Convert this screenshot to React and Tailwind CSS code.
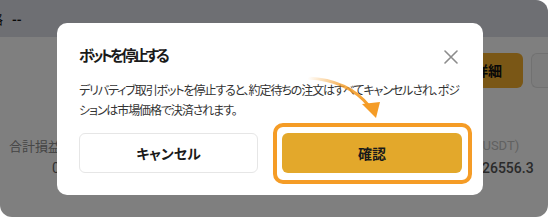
import React from "react";

const jp = { fontFamily: '"Noto Sans CJK JP", "Noto Sans", sans-serif' };
const latin = { fontFamily: 'Roboto, "Liberation Sans", sans-serif' };

export default function App() {
  return (
    <div className="w-[550px] h-[218px] bg-white" style={jp}>
      <div className="relative w-[548px] h-[217px] overflow-hidden rounded-tr-[12px] rounded-b-[12px] bg-white">
        {/* page behind the dialog */}
        <div className="flex h-[37px] items-center bg-[#dcdee6] text-[13px] text-[#111]">
          <span className="-ml-[10px]">格</span>
          <span className="ml-[9px] font-bold">--</span>
        </div>
        <div className="flex justify-end gap-[8px] pt-[16px]">
          <div className="flex h-[35px] w-[70px] items-center justify-center rounded-[6px] bg-[#f4ae2d] text-[14px] font-bold text-[#111]">
            詳細
          </div>
          <div className="h-[35px] w-[17px] rounded-l-[6px] border border-r-0 border-[#e2e2e2] bg-[#f8f8f8]" />
        </div>
        <div className="flex items-start pt-[48px]">
          <div className="flex w-[112px] flex-col items-center">
            <span className="text-[13px] leading-[20px] text-[#8c8c8c]">合計損益(USDT)</span>
            <span className="mt-[2px] text-[14px] leading-[20px] text-[#666]" style={latin}>0</span>
          </div>
          <div className="ml-auto flex w-[70px] flex-col">
            <span className="text-[13px] leading-[20px] text-[#c2c2c2]" style={latin}>
              (USDT)
            </span>
            <span className="mt-[2px] pl-[4px] text-[14px] leading-[20px] font-medium text-[#555]" style={latin}>
              26556.3
            </span>
          </div>
        </div>

        {/* dim overlay */}
        <div className="absolute inset-0 bg-black/50" />

        {/* dialog */}
        <div className="absolute left-[57px] top-[23px] flex w-[426px] h-[172px] flex-col rounded-[10px] bg-white pl-[22px] pr-[21px] pt-[20px] [font-feature-settings:'palt']">
          <div className="flex items-center justify-between">
            <h2 className="text-[15px] leading-[24px] font-bold tracking-[-3px] text-[#1a1a1a]">ボットを停止する</h2>
            <svg width="14" height="14" viewBox="0 0 14 14" className="mr-[4px] mt-[3px]">
              <path d="M1 1 L13 13 M13 1 L1 13" stroke="#8c8c8c" strokeWidth="1.6" strokeLinecap="round" />
            </svg>
          </div>
          <p className="mt-[13px] text-[12px] leading-[20px] tracking-[-1.1px] text-[#333]">
            デリバティブ取引ボットを停止すると、約定待ちの注文はすべてキャンセルされ、ポジションは市場価格で決済されます。
          </p>
          <div className="mt-[13px] flex gap-[24px]">
            <button className="flex h-[40px] w-[179px] items-center justify-center rounded-[6px] border border-[#e6e6e6] bg-white text-[14px] font-bold text-[#1a1a1a]">
              キャンセル
            </button>
            <button className="flex h-[40px] w-[180px] items-center justify-center rounded-[6px] bg-[#e3a82b] text-[14px] font-bold text-[#1a1a1a]">
              確認
            </button>
          </div>
        </div>

        {/* annotation: highlight box + arrow */}
        <div className="absolute left-[273px] top-[123px] h-[61px] w-[199px] rounded-[10px] border-[4px] border-[#f59c26]" />
        <svg className="absolute left-0 top-0" width="548" height="217" viewBox="0 0 548 217">
          <defs>
            <linearGradient id="tail" x1="308" y1="78" x2="370" y2="108" gradientUnits="userSpaceOnUse">
              <stop offset="0" stopColor="#f59c26" stopOpacity="0" />
              <stop offset="0.5" stopColor="#f59c26" stopOpacity="0.8" />
              <stop offset="1" stopColor="#f59c26" />
            </linearGradient>
          </defs>
          <path d="M308 78 Q348 80 369 106" fill="none" stroke="url(#tail)" strokeWidth="3" strokeLinecap="round" />
          <polygon points="362,104 380,102 376,118" fill="#f59c26" />
        </svg>
      </div>
    </div>
  );
}
